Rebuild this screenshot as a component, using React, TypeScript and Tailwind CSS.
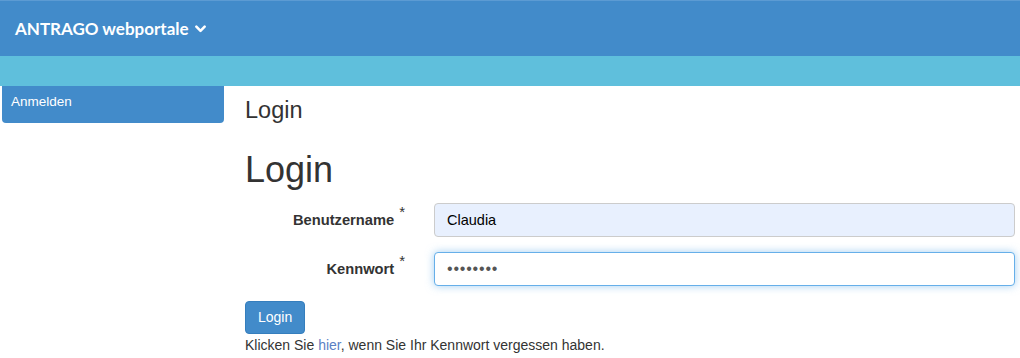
export default function App() {
  return (
    <div className="min-h-[358px] bg-white font-['Liberation_Sans',Arial,sans-serif] text-[14px] text-[#333]">
      <header className="flex h-[56px] items-center border-t border-[#5c9bd3] bg-[#428bca] px-[15px]">
        <span className="flex items-center gap-[6px] font-['Lato',sans-serif] text-[17px] font-bold text-white">
          ANTRAGO webportale
          <svg viewBox="0 0 12 8" className="h-[8px] w-[11px]" fill="none" stroke="currentColor" strokeWidth="2.8" strokeLinecap="round" strokeLinejoin="round">
            <path d="M1.5 1.5 6 6l4.5-4.5" />
          </svg>
        </span>
      </header>
      <div className="h-[30px] bg-[#5fbfdc]" />
      <div className="flex">
        <aside className="w-[224px] shrink-0 pl-[2px]">
          <div className="flex h-[37px] items-center rounded-b-[4px] bg-[#428bca] px-[9px] pb-[4px] text-[13.5px] text-white">
            Anmelden
          </div>
        </aside>
        <main className="flex-1 pl-[21px] pr-[5px]">
          <h2 className="mt-[10px] text-[23.5px] leading-[28px]">Login</h2>
          <h1 className="mt-[26px] text-[36px] leading-[40px]">Login</h1>
          <form className="mt-[13px] flex flex-col gap-[15px]">
            <div className="flex items-center">
              <label className="w-[170px] pr-[10px] text-right text-[14.7px] font-bold">
                Benutzername<sup className="ml-[5px] text-[15px] font-normal">*</sup>
              </label>
              <input
                type="text"
                defaultValue="Claudia"
                className="ml-[19px] h-[34px] flex-1 rounded-[4px] border border-[#ccc] bg-[#e8f0fe] px-[12px] text-[14.5px] text-black outline-none"
              />
            </div>
            <div className="flex items-center">
              <label className="w-[170px] pr-[10px] text-right text-[14.7px] font-bold">
                Kennwort<sup className="ml-[5px] text-[15px] font-normal">*</sup>
              </label>
              <input
                type="password"
                defaultValue="geheim12"
                className="ml-[19px] h-[34px] flex-1 rounded-[4px] border border-[#66afe9] bg-white px-[12px] text-[16px] tracking-[0.8px] text-[#555] shadow-[0_0_8px_rgba(102,175,233,0.6)] outline-none"
              />
            </div>
          </form>
          <button className="mt-[15px] h-[33px] rounded-[4px] border border-[#357ebd] bg-[#428bca] px-[12px] text-[14px] text-white">
            Login
          </button>
          <p className="mt-[1px] leading-[20px]">
            Klicken Sie <a className="text-[#5a7fc4]">hier</a>, wenn Sie Ihr Kennwort vergessen haben.
          </p>
        </main>
      </div>
    </div>
  );
}
